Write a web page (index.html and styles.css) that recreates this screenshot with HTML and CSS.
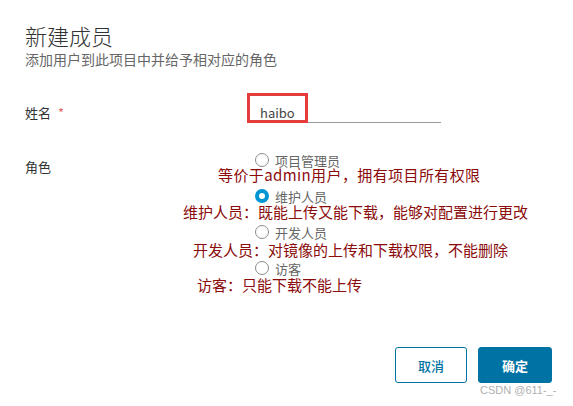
FILE: index.html
```html
<!DOCTYPE html>
<html lang="zh-CN">
<head>
    <meta charset="UTF-8">
    <meta name="viewport" content="width=device-width, initial-scale=1.0">
    <title>新建成员</title>
    <link rel="stylesheet" href="styles.css">
</head>
<body>
    <div class="modal">
        <!-- Encabezado -->
        <h1 class="modal-title">新建成员</h1>
        <p class="modal-sub">添加用户到此项目中并给予相对应的角色</p>

        <!-- Formulario -->
        <div class="form-row">
            <label class="form-label">姓名 <span class="required">*</span></label>
            <div class="input-wrap">
                <input class="text-input" type="text" value="haibo">
                <span class="mark-box"></span>
            </div>
        </div>

        <div class="form-row role-row">
            <label class="form-label role-label">角色</label>
            <div class="radio-group">
                <div class="radio-item"><span class="radio"></span>项目管理员</div>
                <div class="radio-item"><span class="radio checked"></span>维护人员</div>
                <div class="radio-item"><span class="radio"></span>开发人员</div>
                <div class="radio-item"><span class="radio"></span>访客</div>
            </div>
        </div>

        <!-- Notas -->
        <p class="note note-1">等价于admin用户，拥有项目所有权限</p>
        <p class="note note-2">维护人员：既能上传又能下载，能够对配置进行更改</p>
        <p class="note note-3">开发人员：对镜像的上传和下载权限，不能删除</p>
        <p class="note note-4">访客：只能下载不能上传</p>

        <div class="modal-footer">
            <button class="btn btn-outline">取消</button>
            <button class="btn btn-primary">确定</button>
        </div>

        <span class="watermark">CSDN @611-_-</span>
    </div>
</body>
</html>
```

FILE: styles.css
```css
body {
    margin: 0;
    font-family: "Noto Sans CJK SC", "Noto Sans", sans-serif;
    background-color: #fff;
    color: #333;
}
.modal {
    position: relative;
    width: 573px;
    height: 406px;
    box-sizing: border-box;
    padding: 22px 21px 0 25px;
}
.modal-title {
    margin: 0;
    font-size: 22px;
    line-height: 26px;
    font-weight: 300;
    color: #333;
}
.modal-sub {
    margin: 2px 0 0;
    font-size: 14px;
    line-height: 18px;
    color: #666;
}
.form-row {
    display: flex;
    margin-top: 25px;
}
.form-label {
    width: 223px;
    padding-top: 10px;
    font-size: 13px;
    line-height: 20px;
    color: #333;
}
.required {
    color: #e36868;
    margin-left: 4px;
}
.input-wrap {
    position: relative;
    width: 193px;
}
.text-input {
    width: 100%;
    height: 30px;
    box-sizing: border-box;
    padding: 10px 12px 0;
    border: none;
    border-bottom: 1px solid #9a9a9a;
    font-family: inherit;
    font-size: 13px;
    color: #444;
    outline: none;
}
/* recuadro rojo de la captura */
.mark-box {
    position: absolute;
    left: -1px;
    top: 0;
    width: 61px;
    height: 30px;
    box-sizing: border-box;
    border: 3px solid #e43b3b;
}
.role-row {
    margin-top: 25px;
}
.role-label {
    padding-top: 9px;
}
.radio-group {
    display: flex;
    flex-direction: column;
    gap: 12px;
    padding-left: 7px;
}
.radio-item {
    display: flex;
    align-items: center;
    gap: 6px;
    height: 24px;
    font-size: 13px;
    color: #666;
}
.radio {
    width: 14px;
    height: 14px;
    box-sizing: border-box;
    border: 1px solid #8c8c8c;
    border-radius: 50%;
    background: #fff;
}
.radio.checked {
    border: 4.5px solid #0095d3;
    background: #fff;
}
/* notas rojas sobre la captura */
.note {
    position: absolute;
    margin: 0;
    font-size: 15px;
    line-height: 20px;
    color: #8b0a0a;
    white-space: nowrap;
}
.note-1 { left: 218px; top: 165px; letter-spacing: 0.4px; }
.note-2 { left: 183px; top: 202px; }
.note-3 { left: 193px; top: 240px; }
.note-4 { left: 197px; top: 275px; }
.modal-footer {
    display: flex;
    justify-content: flex-end;
    gap: 11px;
    margin-top: 67px;
}
.btn {
    height: 36px;
    border-radius: 3px;
    font-family: inherit;
    font-size: 13px;
    font-weight: 700;
    cursor: pointer;
}
.btn-outline {
    width: 72px;
    background: #fff;
    border: 1px solid #0072a3;
    color: #0072a3;
    font-weight: 500;
}
.btn-primary {
    width: 74px;
    background: #0072a3;
    border: 1px solid #0072a3;
    color: #fff;
}
.watermark {
    position: absolute;
    left: 480px;
    top: 384px;
    font-family: "Liberation Sans", Arial, sans-serif;
    font-size: 11px;
    color: #b0b0b0;
}
```
